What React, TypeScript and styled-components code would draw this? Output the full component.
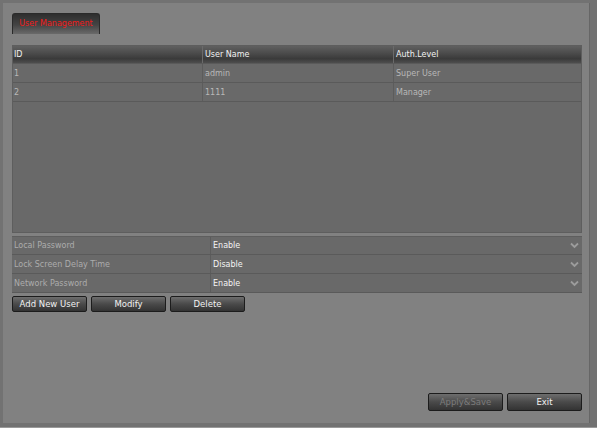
import React from "react";
import styled, { createGlobalStyle } from "styled-components";

const Global = createGlobalStyle`
  html, body { margin: 0; padding: 0; }
  body {
    background: #707070;
    font-family: "DejaVu Sans", "Liberation Sans", sans-serif;
    width: 597px; height: 428px; overflow: hidden;
  }
`;

const Frame = styled.div`
  width: 597px;
  height: 428px;
  box-sizing: border-box;
  padding: 3px 7px 4px 3px;
  background: #727272;
  border-bottom: 1px solid #9a9a9a;
`;

const Panel = styled.div`
  height: 100%;
  box-sizing: border-box;
  background: #818181;
  border-right: 1px solid #666;
  padding: 10px 7px 12px 9px;
  display: flex;
  flex-direction: column;
`;

const TabBar = styled.div`
  display: flex;
  height: 21px;
  margin-bottom: 11px;
`;

const Tab = styled.div`
  width: 88px;
  box-sizing: border-box;
  border: 1px solid #2a2a2a;
  border-bottom: none;
  border-radius: 3px 3px 0 0;
  background: linear-gradient(#2e2e2e, #444 55%, #6a6a6a);
  color: #f01c1c;
  font-size: 8px;
  display: flex;
  align-items: center;
  justify-content: center;
  padding-bottom: 2px;
`;

const Table = styled.div`
  height: 188px;
  background: #696969;
  border: 1px solid #5e5e5e;
  box-sizing: border-box;
  display: flex;
  flex-direction: column;
`;

const Row = styled.div<{ $head?: boolean }>`
  display: grid;
  grid-template-columns: 189px 191px 1fr;
  height: ${(p) => (p.$head ? "18px" : "19px")};
  box-sizing: border-box;
  border-bottom: 1px solid #5a5a5a;
  background: ${(p) =>
    p.$head ? "linear-gradient(#606060, #4a4a4a 45%, #3a3a3a 75%, #4e4e4e)" : "transparent"};
`;

const Cell = styled.div<{ $head?: boolean }>`
  display: flex;
  align-items: center;
  padding-left: 2px;
  font-size: 8px;
  color: ${(p) => (p.$head ? "#f2f2f2" : "#b8b8b8")};
  border-left: 1px solid ${(p) => (p.$head ? "#6a6a6a" : "#5c5c5c")};
  &:first-child { border-left: none; padding-left: 1px; }
`;

const Settings = styled.div`
  margin-top: 3px;
  display: flex;
  flex-direction: column;
`;

const SetRow = styled.div`
  display: grid;
  grid-template-columns: 199px 1fr;
  height: 19px;
  box-sizing: border-box;
  background: #696969;
  border-bottom: 1px solid #5a5a5a;
  &:first-child { border-top: 1px solid #5e5e5e; }
`;

const Label = styled.div`
  display: flex;
  align-items: center;
  padding-left: 2px;
  font-size: 8px;
  color: #acacac;
  border-right: 1px solid #5c5c5c;
`;

const Value = styled.div`
  display: flex;
  align-items: center;
  justify-content: space-between;
  padding: 0 3px 0 2px;
  font-size: 8px;
  color: #f4f4f4;
`;

const Chevron = () => (
  <svg width="9" height="7" viewBox="0 0 9 7">
    <path d="M1 1.5 L4.5 5 L8 1.5" fill="none" stroke="#9c9c9c" strokeWidth="1.8" />
  </svg>
);

const BtnRow = styled.div<{ $end?: boolean }>`
  display: flex;
  gap: 4px;
  justify-content: ${(p) => (p.$end ? "flex-end" : "flex-start")};
  margin-top: ${(p) => (p.$end ? "auto" : "3px")};
`;

const Button = styled.button<{ $disabled?: boolean; $h?: number; $w?: number }>`
  width: ${(p) => p.$w ?? 75}px;
  height: ${(p) => p.$h ?? 16}px;
  box-sizing: border-box;
  border: 1px solid #1c1c1c;
  border-radius: 2px;
  background: linear-gradient(#6e6e6e, #4a4a4a 50%, #333);
  color: ${(p) => (p.$disabled ? "#7c7c7c" : "#f2f2f2")};
  font-family: "DejaVu Sans", "Liberation Sans", sans-serif;
  font-size: 8.5px;
  font-weight: normal;
  padding: 0;
  cursor: default;
`;

const users = [
  { id: "1", name: "admin", level: "Super User" },
  { id: "2", name: "1111", level: "Manager" },
];

const settings = [
  ["Local Password", "Enable"],
  ["Lock Screen Delay Time", "Disable"],
  ["Network Password", "Enable"],
];

export default function App() {
  return (
    <>
      <Global />
      <Frame>
        <Panel>
          <TabBar>
            <Tab>User Management</Tab>
          </TabBar>
          <Table>
            <Row $head>
              <Cell $head>ID</Cell>
              <Cell $head>User Name</Cell>
              <Cell $head>Auth.Level</Cell>
            </Row>
            {users.map((u) => (
              <Row key={u.id}>
                <Cell>{u.id}</Cell>
                <Cell>{u.name}</Cell>
                <Cell>{u.level}</Cell>
              </Row>
            ))}
          </Table>
          <Settings>
            {settings.map(([l, v]) => (
              <SetRow key={l}>
                <Label>{l}</Label>
                <Value>
                  {v}
                  <Chevron />
                </Value>
              </SetRow>
            ))}
          </Settings>
          <BtnRow>
            <Button>Add New User</Button>
            <Button>Modify</Button>
            <Button>Delete</Button>
          </BtnRow>
          <BtnRow $end>
            <Button $disabled $h={18}>Apply&amp;Save</Button>
            <Button $h={18}>Exit</Button>
          </BtnRow>
        </Panel>
      </Frame>
    </>
  );
}
